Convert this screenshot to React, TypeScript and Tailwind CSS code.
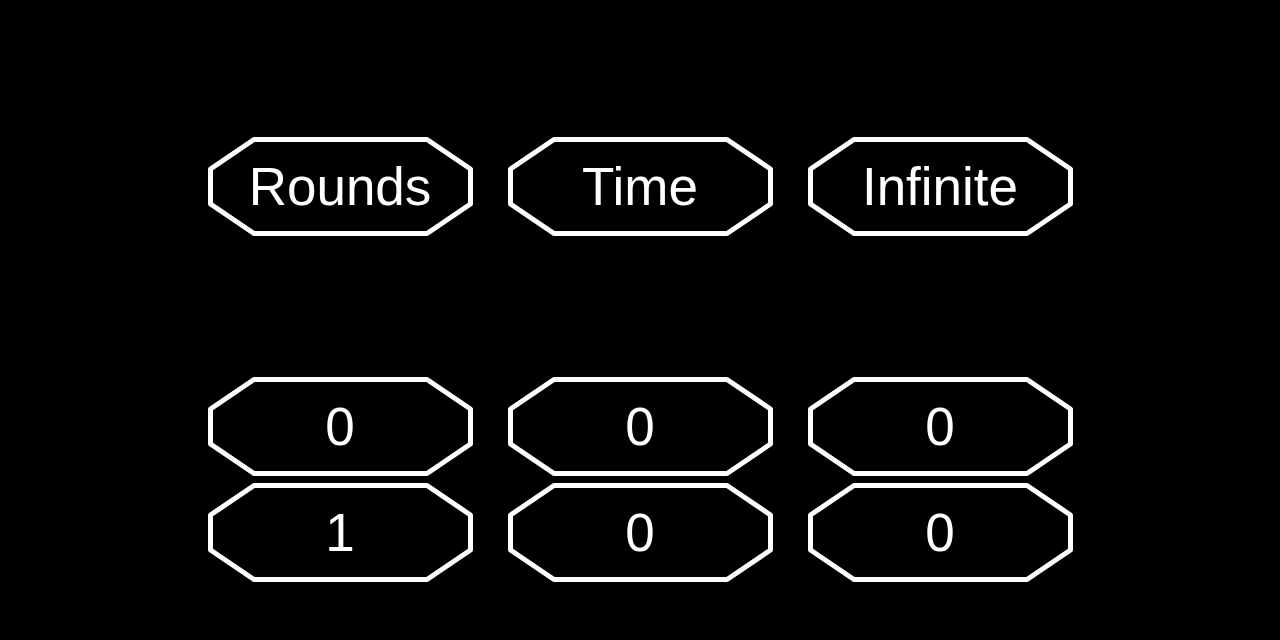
import React from 'react';

function Octagon({ label }: { label: string }) {
  return (
    <div className="relative flex h-[99px] w-[265px] items-center justify-center">
      <svg className="absolute inset-0" width="265" height="99" viewBox="0 0 265 99">
        <polygon
          points="46,2.5 219,2.5 262.5,32 262.5,67 219,96.5 46,96.5 2.5,67 2.5,32"
          fill="black"
          stroke="white"
          strokeWidth="5"
          strokeLinejoin="round"
        />
      </svg>
      <span className="relative text-[53px] leading-none text-white">{label}</span>
    </div>
  );
}

export default function App() {
  const modes = ['Rounds', 'Time', 'Infinite'];
  const scores = [
    ['0', '0', '0'],
    ['1', '0', '0'],
  ];
  return (
    <div
      className="flex h-[640px] w-[1280px] flex-col items-center bg-black pt-[137px]"
      style={{ fontFamily: '"Liberation Sans", Arial, sans-serif' }}
    >
      <div className="grid grid-cols-3 gap-x-[35px]">
        {modes.map((m) => (
          <Octagon key={m} label={m} />
        ))}
      </div>
      <div className="mt-[141px] grid grid-cols-3 gap-x-[35px] gap-y-[7px]">
        {scores.flat().map((s, i) => (
          <Octagon key={i} label={s} />
        ))}
      </div>
    </div>
  );
}
